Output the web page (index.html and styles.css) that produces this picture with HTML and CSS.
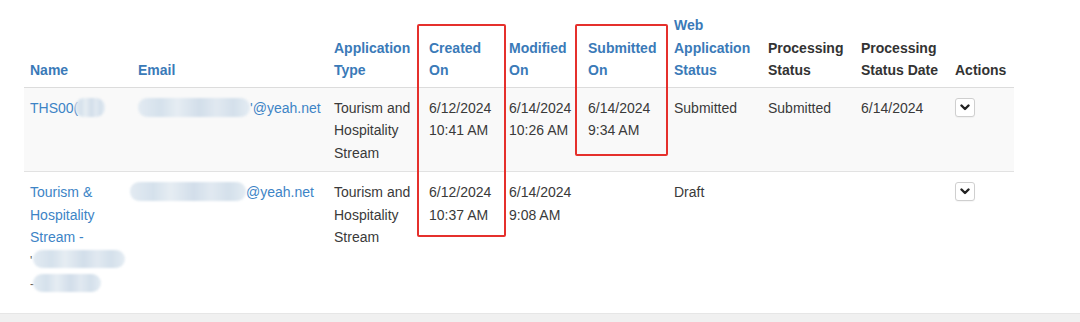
FILE: index.html
```html
<!DOCTYPE html>
<html lang="en">
<head>
<meta charset="utf-8">
<title>Applications</title>
<link rel="stylesheet" href="styles.css">
</head>
<body>
<div class="page">
  <div class="content">
    <table class="grid">
      <colgroup>
        <col class="c-name"><col class="c-email"><col class="c-type"><col class="c-created"><col class="c-modified"><col class="c-submitted"><col class="c-web"><col class="c-proc"><col class="c-procdate"><col class="c-actions">
      </colgroup>
      <thead>
        <tr>
          <th><a class="sort">Name</a></th>
          <th><a class="sort">Email</a></th>
          <th><a class="sort">Application Type</a></th>
          <th><a class="sort">Created On</a></th>
          <th><a class="sort">Modified On</a></th>
          <th><a class="sort">Submitted On</a></th>
          <th><a class="sort">Web Application Status</a></th>
          <th>Processing Status</th>
          <th>Processing Status Date</th>
          <th>Actions</th>
        </tr>
      </thead>
      <tbody>
        <tr class="odd">
          <td><a class="link">THS00(</a><span class="blob b-id"></span></td>
          <td class="email"><span class="blob b-mail"></span><span class="mailtext">'@yeah.net</span></td>
          <td>Tourism and Hospitality Stream</td>
          <td>6/12/2024<br>10:41 AM</td>
          <td>6/14/2024<br>10:26 AM</td>
          <td>6/14/2024<br>9:34 AM</td>
          <td>Submitted</td>
          <td>Submitted</td>
          <td>6/14/2024</td>
          <td><button class="act" type="button" aria-label="Actions"><svg width="10" height="7" viewBox="0 0 10 7"><polyline points="1.5,1.5 5,5 8.5,1.5" fill="none" stroke="#222" stroke-width="2.4" stroke-linecap="round" stroke-linejoin="round"/></svg></button></td>
        </tr>
        <tr>
          <td><a class="link">Tourism &amp; Hospitality Stream -<br><span class="tick">'</span><span class="blob b-n1"></span><br><span class="tick">-</span><span class="blob b-n2"></span></a></td>
          <td class="email"><span class="blob b-mail2"></span><span class="mailtext">@yeah.net</span></td>
          <td>Tourism and Hospitality Stream</td>
          <td>6/12/2024<br>10:37 AM</td>
          <td>6/14/2024<br>9:08 AM</td>
          <td></td>
          <td>Draft</td>
          <td></td>
          <td></td>
          <td><button class="act" type="button" aria-label="Actions"><svg width="10" height="7" viewBox="0 0 10 7"><polyline points="1.5,1.5 5,5 8.5,1.5" fill="none" stroke="#222" stroke-width="2.4" stroke-linecap="round" stroke-linejoin="round"/></svg></button></td>
        </tr>
      </tbody>
    </table>
    <div class="mark mark-created"></div>
    <div class="mark mark-submitted"></div>
  </div>
  <div class="band"></div>
</div>
</body>
</html>
```

FILE: styles.css
```css
* { box-sizing: border-box; }
html, body { margin: 0; padding: 0; background: #fff; }
body {
  font-family: "Liberation Sans", Arial, sans-serif;
  font-size: 14px;
  color: #333;
  width: 1080px;
  height: 322px;
  overflow: hidden;
}
.page {
  display: flex;
  flex-direction: column;
  height: 322px;
}
.content {
  position: relative;
  height: 313px;
  padding: 8px 0 0 24px;
}
.band {
  flex: 1;
  background: #f0f0f0;
  border-top: 1px solid #e6e6e6;
}
.grid {
  width: 990px;
  table-layout: fixed;
  border-collapse: collapse;
  border-spacing: 0;
}
.c-name { width: 108px; }
.c-email { width: 196px; }
.c-type { width: 95px; }
.c-created { width: 80px; }
.c-modified { width: 79px; }
.c-submitted { width: 86px; }
.c-web { width: 94px; }
.c-proc { width: 93px; }
.c-procdate { width: 94px; }
.c-actions { width: 65px; }

.grid th {
  text-align: left;
  vertical-align: bottom;
  font-weight: bold;
  line-height: 22.5px;
  padding: 6px 6px 5px 6px;
  color: #333;
  border-bottom: 1px solid #dcdcdc;
}
.sort { color: #3a7ab8; text-decoration: none; }
.grid td {
  vertical-align: top;
  line-height: 22.5px;
  padding: 9px 6px 7px 6px;
  color: #3a3a3a;
}
.grid tbody tr.odd td {
  background: #f9f9f9;
  border-bottom: 1px solid #e2e2e2;
}
.link { color: #3d84c6; text-decoration: none; }
.email { white-space: nowrap; color: #3d84c6; }
.mailtext { color: #3d84c6; }
.blob {
  display: inline-block;
  vertical-align: middle;
  height: 19px;
  border-radius: 9px;
  background: linear-gradient(90deg, #e3ebf2 0%, #d5e1ec 20%, #e6edf3 35%, #d2deea 55%, #e1e9f1 70%, #d4e0eb 85%, #e4ecf3 100%);
  filter: blur(1px);
  margin-top: -3px;
}
.b-id { width: 30px; margin-left: -3px; }
.b-mail { width: 112px; margin-right: 0; }
.b-mail2 { width: 116px; margin-left: -8px; margin-right: 0; }
.b-n1 { width: 92px; height: 18px; }
.b-n2 { width: 68px; height: 18px; }
.tick { color: #555; font-size: 12px; display: inline-block; width: 3px; }

.act {
  display: flex;
  align-items: center;
  justify-content: center;
  width: 20px;
  height: 19px;
  padding: 0;
  margin: 1px 0 0 0;
  background: #fff;
  border: 1px solid #cfcfcf;
  border-radius: 3px;
  box-shadow: 0 1px 1px rgba(0,0,0,0.04);
}

.mark {
  position: absolute;
  border: 2px solid #e5302c;
  border-radius: 2px;
  pointer-events: none;
}
.mark-created { left: 417px; top: 24px; width: 89px; height: 213px; }
.mark-submitted { left: 575px; top: 24px; width: 93px; height: 132px; }
```
